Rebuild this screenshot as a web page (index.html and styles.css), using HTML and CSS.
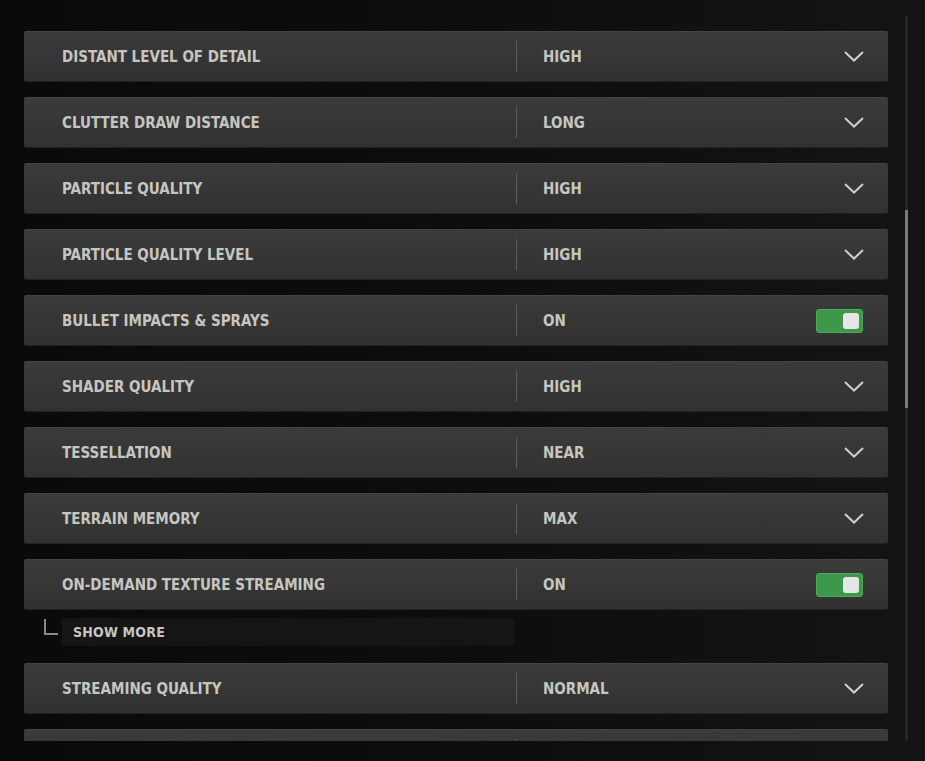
FILE: index.html
```html
<!DOCTYPE html>
<html>
<head>
<meta charset="utf-8">
<link rel="stylesheet" href="styles.css">
</head>
<body>
<div class="screen">
  <div class="viewport">
    <div class="list">
      <div class="row"><span class="label">DISTANT LEVEL OF DETAIL</span><span class="sep"></span><span class="value">HIGH</span><svg class="chev" width="20" height="11" viewBox="0 0 20 11"><path d="M1 1 L10 9.5 L19 1" fill="none" stroke="#cfcfcf" stroke-width="2"/></svg></div>
      <div class="row"><span class="label">CLUTTER DRAW DISTANCE</span><span class="sep"></span><span class="value">LONG</span><svg class="chev" width="20" height="11" viewBox="0 0 20 11"><path d="M1 1 L10 9.5 L19 1" fill="none" stroke="#cfcfcf" stroke-width="2"/></svg></div>
      <div class="row"><span class="label">PARTICLE QUALITY</span><span class="sep"></span><span class="value">HIGH</span><svg class="chev" width="20" height="11" viewBox="0 0 20 11"><path d="M1 1 L10 9.5 L19 1" fill="none" stroke="#cfcfcf" stroke-width="2"/></svg></div>
      <div class="row"><span class="label">PARTICLE QUALITY LEVEL</span><span class="sep"></span><span class="value">HIGH</span><svg class="chev" width="20" height="11" viewBox="0 0 20 11"><path d="M1 1 L10 9.5 L19 1" fill="none" stroke="#cfcfcf" stroke-width="2"/></svg></div>
      <div class="row"><span class="label">BULLET IMPACTS &amp; SPRAYS</span><span class="sep"></span><span class="value">ON</span><span class="toggle"><span class="knob"></span></span></div>
      <div class="row"><span class="label">SHADER QUALITY</span><span class="sep"></span><span class="value">HIGH</span><svg class="chev" width="20" height="11" viewBox="0 0 20 11"><path d="M1 1 L10 9.5 L19 1" fill="none" stroke="#cfcfcf" stroke-width="2"/></svg></div>
      <div class="row"><span class="label">TESSELLATION</span><span class="sep"></span><span class="value">NEAR</span><svg class="chev" width="20" height="11" viewBox="0 0 20 11"><path d="M1 1 L10 9.5 L19 1" fill="none" stroke="#cfcfcf" stroke-width="2"/></svg></div>
      <div class="row"><span class="label">TERRAIN MEMORY</span><span class="sep"></span><span class="value">MAX</span><svg class="chev" width="20" height="11" viewBox="0 0 20 11"><path d="M1 1 L10 9.5 L19 1" fill="none" stroke="#cfcfcf" stroke-width="2"/></svg></div>
      <div class="row"><span class="label">ON-DEMAND TEXTURE STREAMING</span><span class="sep"></span><span class="value">ON</span><span class="toggle"><span class="knob"></span></span></div>
      <div class="more-line">
        <span class="corner"></span>
        <div class="more">SHOW MORE</div>
      </div>
      <div class="row"><span class="label">STREAMING QUALITY</span><span class="sep"></span><span class="value">NORMAL</span><svg class="chev" width="20" height="11" viewBox="0 0 20 11"><path d="M1 1 L10 9.5 L19 1" fill="none" stroke="#cfcfcf" stroke-width="2"/></svg></div>
      <div class="row"><span class="label">&nbsp;</span><span class="sep"></span><span class="value"></span></div>
    </div>
    <div class="scrollbar"><div class="thumb"></div></div>
  </div>
</div>
</body>
</html>
```
FILE: styles.css
```css
* { box-sizing: border-box; }
html, body { margin: 0; padding: 0; }
body {
  width: 925px;
  height: 761px;
  overflow: hidden;
  background: linear-gradient(90deg, #0a0a0a 0%, #0d0d0d 50%, #141414 100%);
  font-family: "DejaVu Sans Condensed", "DejaVu Sans", sans-serif;
  font-weight: bold;
}
.screen {
  height: 761px;
  padding: 0 0 0 24px;
}
.viewport {
  height: 741px;
  overflow: hidden;
  display: flex;
  gap: 17px;
  padding-top: 31px;
}
.list {
  width: 864px;
  display: flex;
  flex-direction: column;
  gap: 16px;
  flex-shrink: 0;
}
.row {
  height: 50px;
  flex-shrink: 0;
  display: flex;
  align-items: center;
  background: linear-gradient(180deg, #3b3b3b 0%, #353535 60%, #313131 100%);
  border-top: 1px solid #444;
  border-radius: 2px;
  box-shadow: 0 1px 0 #222;
  padding: 0 23px 0 38px;
  color: #c6c6c0;
  font-size: 15px;
  letter-spacing: 0;
}
.label {
  width: 454px;
  flex-shrink: 0;
}
.sep {
  width: 1px;
  height: 31px;
  background: #5c5c5c;
  flex-shrink: 0;
}
.value {
  margin-left: 26px;
  flex: 1;
}
.chev { display: block; margin-right: 1px; }
.toggle {
  width: 47px;
  height: 24px;
  margin-right: 2px;
  background: #3d984a;
  border: 1px solid #4fa95a;
  border-radius: 3px;
  display: flex;
  align-items: center;
  justify-content: flex-end;
  padding-right: 3px;
}
.knob {
  width: 16px;
  height: 16px;
  background: #e6e6e6;
  border-radius: 3px;
}
.more-line {
  display: flex;
  align-items: flex-start;
  height: 38px;
  flex-shrink: 0;
  margin-top: -7px;
  margin-bottom: -9px;
}
.corner {
  width: 14px;
  height: 16px;
  border-left: 2px solid #8a8a8a;
  border-bottom: 2px solid #8a8a8a;
  margin-left: 20px;
  margin-top: 1px;
}
.more {
  margin-left: 4px;
  width: 453px;
  height: 28px;
  background: #151515;
  border-radius: 2px;
  color: #c6c6c0;
  font-size: 14px;
  letter-spacing: 0.2px;
  display: flex;
  align-items: center;
  padding-left: 11px;
}
.scrollbar {
  width: 3px;
  margin-top: -15px;
  height: 725px;
  background: #262626;
  position: relative;
}
.thumb {
  position: absolute;
  left: 0;
  top: 194px;
  width: 3px;
  height: 198px;
  background: #7a7a7a;
}
```
